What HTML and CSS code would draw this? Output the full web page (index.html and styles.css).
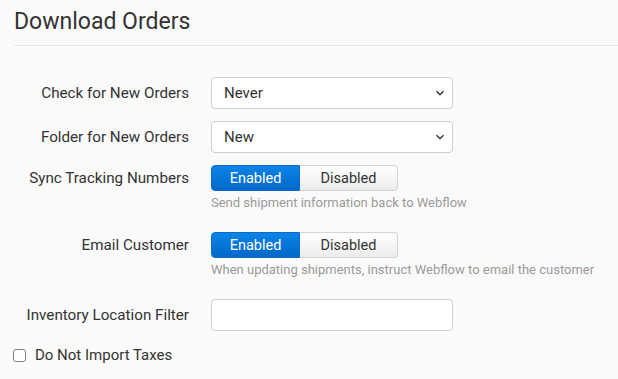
FILE: index.html
```html
<!DOCTYPE html>
<html>
	<head>
		<meta charset="utf-8"/>
		<title>Download Orders</title>
		<link rel="stylesheet" href="styles.css">
	</head>
	<body>
		<main class="panel">
			<h2 class="panel-title">Download Orders</h2>
			<div class="form">
				<div class="row">
					<label class="row-label">Check for New Orders</label>
					<div class="row-field">
						<div class="select">
							<span>Never</span>
							<svg width="10" height="6" viewBox="0 0 10 6"><path d="M1.5 1.2 5 4.6 8.5 1.2" fill="none" stroke="#444" stroke-width="1.6"/></svg>
						</div>
					</div>
				</div>
				<div class="row">
					<label class="row-label">Folder for New Orders</label>
					<div class="row-field">
						<div class="select">
							<span>New</span>
							<svg width="10" height="6" viewBox="0 0 10 6"><path d="M1.5 1.2 5 4.6 8.5 1.2" fill="none" stroke="#444" stroke-width="1.6"/></svg>
						</div>
					</div>
				</div>
				<div class="row row-toggle">
					<label class="row-label">Sync Tracking Numbers</label>
					<div class="row-field">
						<div class="toggle">
							<button class="toggle-btn on">Enabled</button>
							<button class="toggle-btn">Disabled</button>
						</div>
						<p class="help">Send shipment information back to Webflow</p>
					</div>
				</div>
				<div class="row row-toggle">
					<label class="row-label">Email Customer</label>
					<div class="row-field">
						<div class="toggle">
							<button class="toggle-btn on">Enabled</button>
							<button class="toggle-btn">Disabled</button>
						</div>
						<p class="help">When updating shipments, instruct Webflow to email the customer</p>
					</div>
				</div>
				<div class="row">
					<label class="row-label">Inventory Location Filter</label>
					<div class="row-field">
						<input class="text-input" type="text">
					</div>
				</div>
				<label class="check">
					<span class="check-box"></span>
					Do Not Import Taxes
				</label>
			</div>
		</main>
	</body>
</html>
```

FILE: styles.css
```css
body {
	margin: 0;
	background: #fafafa;
	font-family: Roboto, 'Liberation Sans', sans-serif;
	color: #333;
}
.panel {
	padding: 8px 0 0 14px;
}
.panel-title {
	font-size: 23px;
	font-weight: 400;
	line-height: 27px;
	color: #333;
	margin: 0;
	padding-bottom: 10px;
	border-bottom: 1px solid #e6e6e6;
}
.form {
	padding-top: 31px;
}
.row {
	display: grid;
	grid-template-columns: 175px 242px;
	column-gap: 22px;
	align-items: start;
	margin-bottom: 12px;
}
.row-toggle {
	margin-bottom: 22px;
}
.row-label {
	font-size: 15.2px;
	text-align: right;
	line-height: 32px;
	color: #333;
}
.row-toggle .row-label {
	line-height: 26px;
}
.select, .text-input {
	box-sizing: border-box;
	width: 242px;
	height: 32px;
	border: 1px solid #cfcfcf;
	border-radius: 4px;
	background: #fff;
}
.select {
	display: flex;
	align-items: center;
	justify-content: space-between;
	padding: 0 7px 0 12px;
	font-size: 15px;
	color: #333;
}
.text-input {
	display: block;
	margin: 0;
}
.toggle {
	display: flex;
	width: 187px;
	height: 26px;
}
.toggle-btn {
	flex: 0 0 auto;
	box-sizing: border-box;
	height: 26px;
	font-family: inherit;
	font-size: 14.5px;
	border: 1px solid #d4d4d4;
	background: linear-gradient(#ffffff, #ececec);
	color: #333;
	width: 98px;
	border-radius: 0 4px 4px 0;
	border-left: none;
	padding: 0;
}
.toggle-btn.on {
	width: 89px;
	background: linear-gradient(#0b84e6, #0068c9);
	border: 1px solid #0a6cc8;
	color: #fff;
	border-radius: 4px 0 0 4px;
}
.help {
	font-size: 13px;
	color: #9a9a9a;
	margin: 4px 0 0;
	line-height: 15px;
	white-space: nowrap;
}
.check {
	display: flex;
	align-items: center;
	gap: 9px;
	font-size: 15px;
	line-height: 18px;
	color: #333;
	margin-top: 15px;
}
.check-box {
	box-sizing: border-box;
	width: 13px;
	height: 13px;
	margin-left: -1px;
	border: 1px solid #808080;
	border-radius: 3px;
	background: #fff;
}
```
